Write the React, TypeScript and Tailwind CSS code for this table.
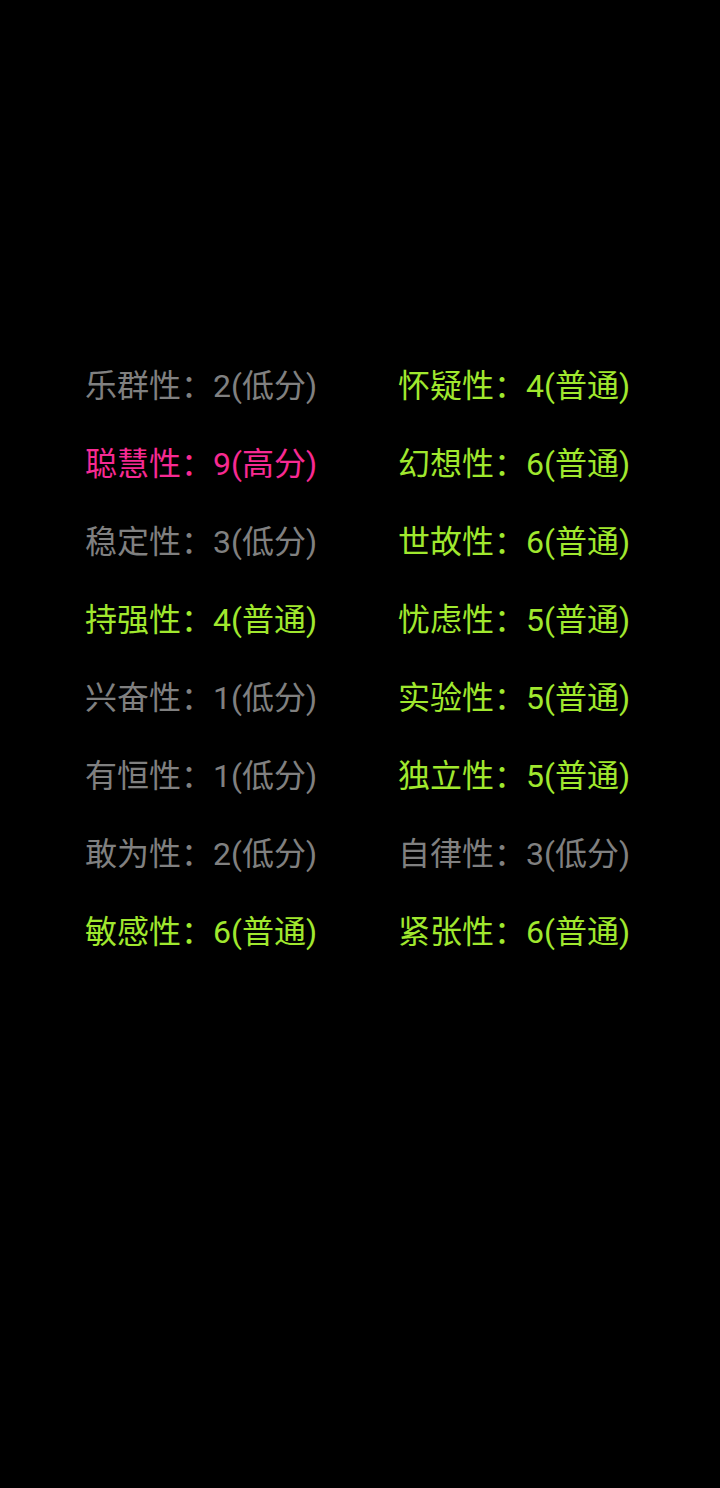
import React from "react";

type Level = "low" | "mid" | "high";

const rows: [string, number, Level, string, number, Level][] = [
  ["乐群性", 2, "low", "怀疑性", 4, "mid"],
  ["聪慧性", 9, "high", "幻想性", 6, "mid"],
  ["稳定性", 3, "low", "世故性", 6, "mid"],
  ["持强性", 4, "mid", "忧虑性", 5, "mid"],
  ["兴奋性", 1, "low", "实验性", 5, "mid"],
  ["有恒性", 1, "low", "独立性", 5, "mid"],
  ["敢为性", 2, "low", "自律性", 3, "low"],
  ["敏感性", 6, "mid", "紧张性", 6, "mid"],
];

const levelText: Record<Level, string> = { low: "低分", mid: "普通", high: "高分" };
const levelColor: Record<Level, string> = {
  low: "text-[#808080]",
  mid: "text-[#a0e82e]",
  high: "text-[#f72a92]",
};

const Trait = ({ name, score, level }: { name: string; score: number; level: Level }) => (
  <div className={`whitespace-nowrap ${levelColor[level]}`}>
    {name}：{score}({levelText[level]})
  </div>
);

export default function App() {
  return (
    <div
      className="min-h-[1488px] w-[720px] bg-black pt-[347px] pl-[85px]"
      style={{ fontFamily: 'Roboto, "Noto Sans CJK SC", sans-serif' }}
    >
      <div className="grid grid-cols-[313px_auto] text-[32px] leading-[78px]">
        {rows.map(([n1, s1, l1, n2, s2, l2]) => (
          <React.Fragment key={n1}>
            <Trait name={n1} score={s1} level={l1} />
            <Trait name={n2} score={s2} level={l2} />
          </React.Fragment>
        ))}
      </div>
    </div>
  );
}
